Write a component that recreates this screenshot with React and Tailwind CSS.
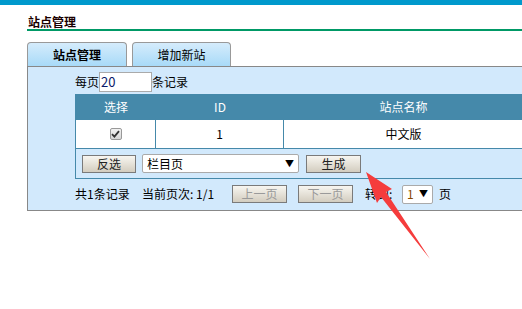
import React from 'react'

const font = { fontFamily: '"Noto Sans CJK SC", "Liberation Sans", sans-serif' }

function Btn({ children, disabled, className = '' }) {
  return (
    <div
      className={`flex items-center justify-center h-[18px] border border-[#7a7a7a] bg-gradient-to-b from-[#f8f6f1] to-[#d3cdbf] text-[12px] leading-none ${
        disabled ? 'text-[#9a9a9a]' : 'text-[#222]'
      } ${className}`}
    >
      {children}
    </div>
  )
}

function Tab({ children, active, className = '' }) {
  return (
    <div
      className={`h-[24px] border border-b-0 border-[#999] rounded-t-[4px] bg-[linear-gradient(#d5ecfc,#a8daf8)] text-center text-[12px] leading-[23px] text-black ${
        active ? 'font-bold' : ''
      } ${className}`}
    >
      {children}
    </div>
  )
}

export default function App() {
  return (
    <div className="relative w-[522px] h-[309px] overflow-hidden bg-white" style={font}>
      <div className="h-[5px] bg-[#0099cc]" />

      <div className="ml-[27px] w-[560px]">
        {/* page title */}
        <div className="pt-[9px] pl-px h-[26px] border-b-2 border-[#009966] text-[12px] leading-[15px] font-bold text-[#1a0000]">
          站点管理
        </div>

        {/* tabs */}
        <div className="mt-[11px] flex items-end gap-[5px]">
          <Tab active className="w-[100px]">站点管理</Tab>
          <Tab className="w-[99px]">增加新站</Tab>
        </div>

        {/* panel */}
        <div className="h-[145px] border border-[#888] bg-[#d2e9fc] pl-[47px] pt-[5px]">
          <div className="flex items-center h-[20px] text-[12px] text-black">
            <span>每页</span>
            <div className="w-[53px] h-[20px] border border-[#aaa] bg-white flex items-center pl-px text-[13px] text-[#0a1a6a]">
              20
            </div>
            <span>条记录</span>
          </div>

          <div className="mt-[2px] w-[448px] border-l border-b border-[#4589aa]">
            <div className="grid grid-cols-[80px_128px_1fr] h-[26px] bg-[#4589aa] text-white text-[12px]">
              <div className="flex items-center justify-center">选择</div>
              <div className="flex items-center justify-center">ID</div>
              <div className="flex items-center justify-center">站点名称</div>
            </div>
            <div className="grid grid-cols-[80px_128px_1fr] h-[29px] bg-white text-[12px] text-black border-b border-[#4589aa]">
              <div className="flex items-center justify-center border-r border-[#4589aa]">
                <div className="w-[12px] h-[12px] rounded-[2px] border border-[#999] bg-gradient-to-b from-[#f2f2f2] to-[#d6d6d6] flex items-center justify-center">
                  <svg width="9" height="8" viewBox="0 0 9 8">
                    <path d="M1 4.2 L3.4 6.6 L8 1.2" fill="none" stroke="#333" strokeWidth="1.8" />
                  </svg>
                </div>
              </div>
              <div className="flex items-center justify-center border-r border-[#4589aa]">1</div>
              <div className="flex items-center justify-center">中文版</div>
            </div>
            <div className="h-[29px] flex items-center pl-[6px]">
              <Btn className="w-[54px]">反选</Btn>
              <div className="ml-[6px] w-[157px] h-[19px] border border-[#aaa] rounded-[2px] bg-white flex items-center justify-between px-[4px] text-[12px] text-black">
                <span>栏目页</span>
                <span className="text-[9px]">▼</span>
              </div>
              <Btn className="ml-[7px] w-[55px]">生成</Btn>
            </div>
          </div>

          <div className="h-[30px] flex items-center text-[12px] text-black">
            <span className="w-[67px]">共1条记录</span>
            <span className="w-[90px]">当前页次: 1/1</span>
            <Btn disabled className="w-[55px]">上一页</Btn>
            <Btn disabled className="ml-[11px] w-[55px]">下一页</Btn>
            <span className="ml-[12px] w-[37px]">转到:</span>
            <div className="w-[31px] h-[19px] border border-[#aaa] rounded-[2px] bg-white flex items-center justify-between px-[4px] text-[12px]">
              <span className="text-[#8a4a00]">1</span>
              <span className="text-[9px]">▼</span>
            </div>
            <span className="ml-[6px]">页</span>
          </div>
        </div>
      </div>

      {/* red annotation arrow */}
      <svg className="absolute left-0 top-0 pointer-events-none" width="522" height="309">
        <polygon points="366,172 392,189 386,192 430,259 381,197 377,203" fill="#f53c3c" />
      </svg>
    </div>
  )
}
